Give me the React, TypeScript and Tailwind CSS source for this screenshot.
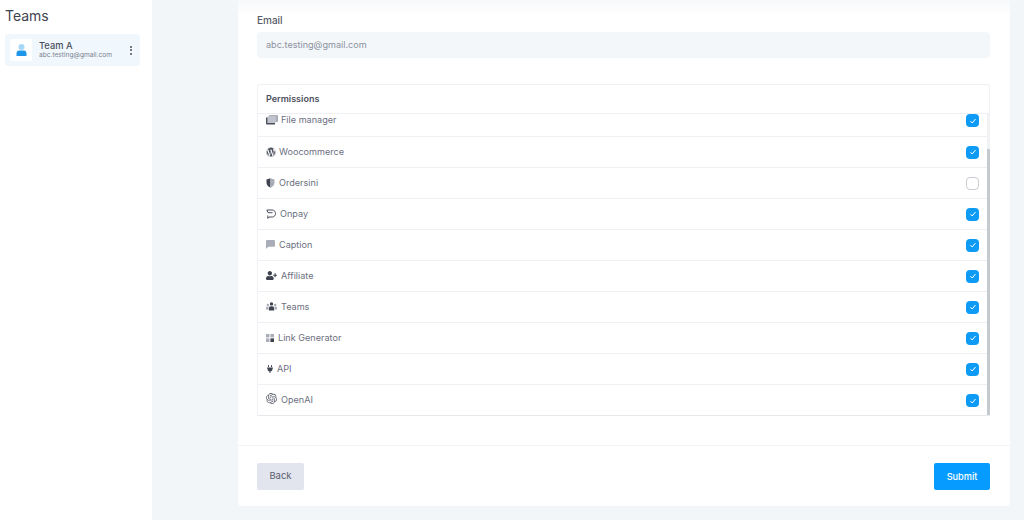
import { type ReactNode } from 'react';
import { BsChatLeftFill } from 'react-icons/bs';
import { FaPlug, FaUserPlus, FaWordpress } from 'react-icons/fa';
import { SiOpenai } from 'react-icons/si';

interface Permission {
  readonly label: string;
  readonly icon: ReactNode;
  readonly gap: string;
  readonly checked: boolean;
}

function FolderStack() {
  return (
    <svg width="12" height="10" viewBox="0 0 12 10" className="shrink-0">
      <rect x="3" y="0" width="9" height="7" rx="1" fill="#a9adb8" />
      <rect x="1.5" y="1" width="8.5" height="7" rx="1" fill="#c0c3cc" />
      <path d="M0 2.5h1.5V8H9v1.6H1a1 1 0 0 1-1-1z" fill="#4b4f5c" />
    </svg>
  );
}

function ShieldIcon() {
  return (
    <svg width="9" height="10" viewBox="0 0 9 10" className="shrink-0">
      <path d="M4.5 0.3 0.5 1.6v3c0 2.5 1.7 4.2 4 5.1z" fill="#3f4350" />
      <path d="M4.5 0.3 8.5 1.6v3c0 2.5-1.7 4.2-4 5.1z" fill="#a9adb8" />
    </svg>
  );
}

function OnpayIcon() {
  return (
    <svg width="10" height="10" viewBox="0 0 10 10" fill="none" stroke="#4b4f5c" strokeWidth="1" className="shrink-0">
      <path d="M0.8 1h5.7C8.5 1 9.5 3 9.5 4.5S8.5 8 6.5 8H3L1.8 9.4 1.8 6.5" />
      <path d="M0.8 1l1.2 2.7h4.5" />
    </svg>
  );
}

function TeamIcon() {
  return (
    <svg width="11" height="9" viewBox="0 0 11 9" className="shrink-0">
      <circle cx="1.8" cy="3" r="1.2" fill="#a9adb8" />
      <circle cx="9.2" cy="3" r="1.2" fill="#a9adb8" />
      <path d="M0 7.5V6a1.5 1.5 0 0 1 1.5-1.5h1V7.5zM11 7.5V6a1.5 1.5 0 0 0-1.5-1.5h-1V7.5z" fill="#a9adb8" />
      <circle cx="5.5" cy="1.9" r="1.7" fill="#3f4350" />
      <path d="M2.9 8.6V6.2a2 2 0 0 1 2-2h1.2a2 2 0 0 1 2 2v2.4z" fill="#3f4350" />
    </svg>
  );
}

function LinkGrid() {
  return (
    <svg width="8" height="8" viewBox="0 0 8 8" className="shrink-0">
      <rect x="0" y="0" width="3.4" height="3.4" fill="#a9adb8" />
      <rect x="4.4" y="0" width="3.6" height="3.4" fill="#a9adb8" />
      <rect x="0" y="4.4" width="3.4" height="3.6" fill="#a9adb8" />
      <rect x="4.4" y="4.4" width="3.6" height="3.6" fill="#3f4350" />
    </svg>
  );
}

const permissions: readonly Permission[] = [
  { label: 'File manager', icon: <FolderStack />, gap: 'gap-[3px]', checked: true },
  { label: 'Woocommerce', icon: <FaWordpress className="size-[10px] shrink-0 text-[#4b4f5c]" />, gap: 'gap-[3px]', checked: true },
  { label: 'Ordersini', icon: <ShieldIcon />, gap: 'gap-[4px]', checked: false },
  { label: 'Onpay', icon: <OnpayIcon />, gap: 'gap-[4px]', checked: true },
  { label: 'Caption', icon: <BsChatLeftFill className="size-[9px] shrink-0 text-[#a9adb8]" />, gap: 'gap-[4px]', checked: true },
  { label: 'Affiliate', icon: <FaUserPlus className="size-[11px] shrink-0 text-[#3f4350]" />, gap: 'gap-[4px]', checked: true },
  { label: 'Teams', icon: <TeamIcon />, gap: 'gap-[4px]', checked: true },
  { label: 'Link Generator', icon: <LinkGrid />, gap: 'gap-[4px]', checked: true },
  { label: 'API', icon: <FaPlug className="size-[8px] shrink-0 text-[#3f4350]" />, gap: 'gap-[3px]', checked: true },
  { label: 'OpenAI', icon: <SiOpenai className="-mt-[2px] size-[11px] shrink-0 text-[#5b5f6b]" />, gap: 'gap-[4px]', checked: true }
];

function Checkbox({ checked }: { readonly checked: boolean }) {
  if (!checked) {
    return <span className="size-[13px] shrink-0 rounded-[4px] border border-[#c9ccd2] bg-white" />;
  }

  return (
    <span className="flex size-[13px] shrink-0 items-center justify-center rounded-[4px] bg-[#0d9bf5]">
      <svg width="8" height="8" viewBox="0 0 8 8" fill="none" stroke="white" strokeWidth="1">
        <path d="M1.5 4.2 3.2 6 6.5 2" />
      </svg>
    </span>
  );
}

function PermissionRow({ permission, first, last }: { readonly permission: Permission; readonly first: boolean; readonly last: boolean }) {
  return (
    <div
      className={`flex items-center justify-between border-b border-[#eef0f3] pr-[8px] pl-[8px] last:border-b-0 ${
        first ? 'h-[23px] items-start' : 'h-[31px]'
      }`}
    >
      <div className={`flex items-center text-[9.1px] text-[#6c7080] ${permission.gap} ${first || last ? '-mt-px' : ''}`}>
        {permission.icon}
        <span>{permission.label}</span>
      </div>
      <Checkbox checked={permission.checked} />
    </div>
  );
}

function Sidebar() {
  return (
    <aside className="h-[520px] w-[152px] shrink-0 bg-white pt-[7px] pl-[5px]">
      <h1 className="text-[14px] leading-[18px] font-normal text-[#3f4350]">Teams</h1>
      <div className="mt-[9px] flex h-[32px] w-[135px] items-center rounded-[3px] bg-[#f0f8fe] pr-[8px] pl-[5px]">
        <div className="flex size-[22px] shrink-0 items-center justify-center rounded-[2px] bg-white">
          <svg width="11" height="12" viewBox="0 0 11 12">
            <circle cx="5.5" cy="3" r="3" fill="#a8d8f8" />
            <path d="M0.5 12V9.5a3 3 0 0 1 3-3h4a3 3 0 0 1 3 3V12z" fill="#1f96ea" />
          </svg>
        </div>
        <div className="ml-[7px] min-w-0 flex-1">
          <div className="text-[9.3px] leading-[11px] font-medium text-[#4b4f5c]">Team A</div>
          <div className="text-[6.6px] leading-[9px] text-[#7b7f8e]">abc.testing@gmail.com</div>
        </div>
        <div className="flex flex-col gap-[1.5px]">
          <span className="size-[2px] rounded-full bg-[#4b4f5c]" />
          <span className="size-[2px] rounded-full bg-[#4b4f5c]" />
          <span className="size-[2px] rounded-full bg-[#4b4f5c]" />
        </div>
      </div>
    </aside>
  );
}

export default function App() {
  return (
    <div className="flex h-[520px] w-[1024px] overflow-hidden bg-[#f2f6f9] font-['Inter','Liberation_Sans',sans-serif]">
      <Sidebar />
      <main className="ml-[86px] h-[506px] w-[772px] rounded-b-[4px] bg-gradient-to-b from-[#f7f8fb] from-0% to-white to-[3%] pt-[14px] pr-[20px] pl-[19px]">
        <label className="block text-[10px] leading-[13px] font-medium text-[#565a68]">Email</label>
        <div className="mt-[5px] flex h-[26px] items-center rounded-[4px] bg-[#f3f7fa] px-[9px] text-[9.1px] text-[#8d919e]">
          abc.testing@gmail.com
        </div>

        <section className="mt-[26px] rounded-t-[3px] border border-[#f0f1f4] border-b-[#e6e8ec]">
          <h2 className="flex h-[29px] items-center border-b border-[#eef0f3] pl-[8px] text-[9px] font-semibold text-[#4b4f5c]">
            Permissions
          </h2>
          <div className="flex h-[301px]">
            <div className="min-w-0 flex-1 overflow-hidden">
              {permissions.map((permission, index) => (
                <PermissionRow
                  key={permission.label}
                  permission={permission}
                  first={index === 0}
                  last={index === permissions.length - 1}
                />
              ))}
            </div>
            <div className="-mr-px flex w-[3px] flex-col bg-[#f1f2f4]">
              <div className="h-[35px]" />
              <div className="flex-1 bg-[#c5cad1]" />
            </div>
          </div>
        </section>

        <div className="-mr-[20px] -ml-[19px] mt-[29px] border-t border-[#f3f4f7]" />

        <div className="mt-[17px] flex items-center justify-between">
          <button type="button" className="h-[27px] w-[47px] rounded-[2px] bg-[#e2e4ee] text-[9.5px] text-[#5b5f6e]">
            Back
          </button>
          <button type="button" className="h-[27px] w-[56px] rounded-[2px] bg-[#069cff] text-[9.2px] font-medium text-white">
            Submit
          </button>
        </div>
      </main>
    </div>
  );
}
